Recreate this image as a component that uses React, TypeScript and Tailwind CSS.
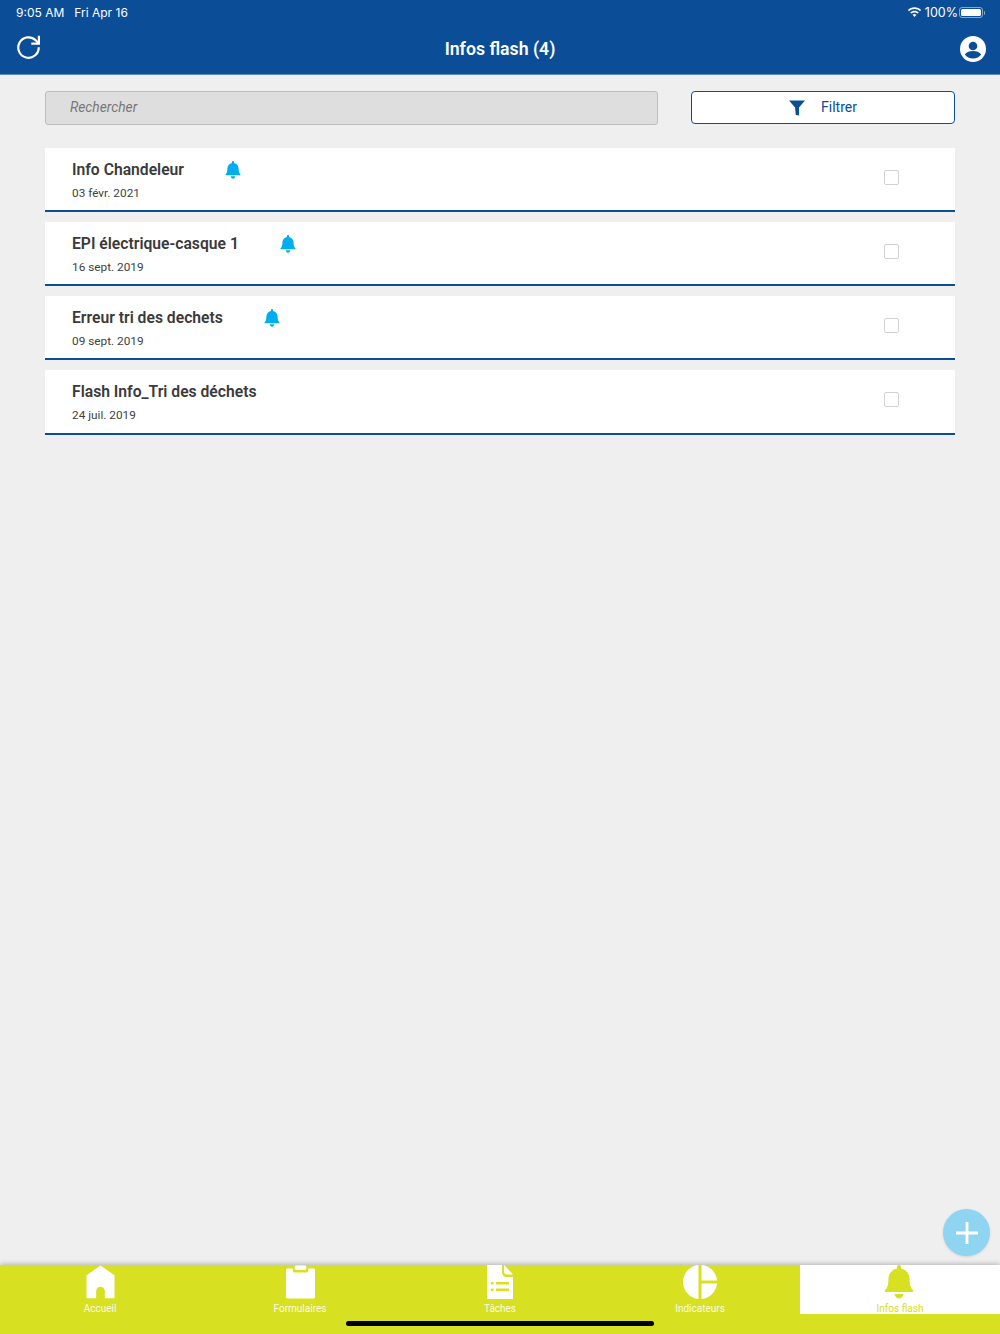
import React from 'react';

const NAVY = '#0b4e97';

const items = [
  { title: 'Info Chandeleur', date: '03 févr. 2021', bell: true },
  { title: 'EPI électrique-casque 1', date: '16 sept. 2019', bell: true },
  { title: 'Erreur tri des dechets', date: '09 sept. 2019', bell: true },
  { title: 'Flash Info_Tri des déchets', date: '24 juil. 2019', bell: false },
];

const BellIcon = ({ className }: { className?: string }) => (
  <svg viewBox="0 0 30 34" className={className} fill="currentColor">
    <path d="M15 0c1.200 0 2 .9 2 2v1.600c5.300 1 8.600 5.200 8.600 10.900 0 6.200 1.400 8.400 3.300 10.600.7.800.3 2-.9 2H2c-1.200 0-1.600-1.200-.9-2C3 22.900 4.400 20.700 4.400 14.500c0-5.700 3.300-9.900 8.600-10.900V2c0-1.100.8-2 2-2z" />
    <path d="M10.500 29h9c-.4 2.700-2.200 4.500-4.500 4.500s-4.100-1.800-4.500-4.500z" />
  </svg>
);

const HomeIcon = () => (
  <svg viewBox="0 0 30 34" className="w-[29px] h-[34px] shrink-0" fill="white">
    <path fillRule="evenodd" d="M15 0l14.500 10v22.500c0 .8-.5 1.300-1.200 1.300H19.500V26.500c0-2.500-2-4.500-4.500-4.500s-4.500 2-4.500 4.500v7.300H1.700c-.7 0-1.200-.5-1.200-1.300V10z" />
  </svg>
);

const ClipboardIcon = () => (
  <svg viewBox="0 0 30 34" className="w-[29px] h-[34px] shrink-0" fill="white">
    <rect x="9" y="0" width="12" height="4.500" rx="1.500" />
    <path d="M1.500 3H7v2c0 1.300.9 2.300 2.200 2.300h11.600C22.100 7.300 23 6.300 23 5V3h5.500c.8 0 1.500.7 1.500 1.500v28c0 .8-.7 1.500-1.500 1.500h-27C.7 34 0 33.300 0 32.500v-28C0 3.700.7 3 1.500 3z" />
  </svg>
);

const TaskIcon = () => (
  <svg viewBox="0 0 26 34" className="w-[26px] h-[34px] shrink-0" fill="white">
    <path d="M17 0l9 9.500h-6c-1.700 0-3-1.300-3-3z" />
    <path
      fillRule="evenodd"
      d="M0 0h15v7.500c0 2.500 2 4.500 4.500 4.500H26v22H0zM4 17v2.500h2.500V17zM9 17v2.500h13V17zM4 23.500V26h2.500v-2.500zM9 23.500V26h13v-2.500z"
    />
  </svg>
);

const PieIcon = () => (
  <svg viewBox="0 0 34 34" className="w-[34px] h-[34px] shrink-0" fill="white">
    <path d="M15.500 0v34C6.800 33.300 0 26 0 17S6.800.7 15.500 0z" />
    <path d="M18.500 0C26.800.7 33.300 7.200 34 15.500H18.500z" />
    <path d="M18.500 18.500H34C33.300 26.800 26.800 33.300 18.500 34z" />
  </svg>
);

const tabs = [
  { label: 'Accueil', icon: <HomeIcon /> },
  { label: 'Formulaires', icon: <ClipboardIcon /> },
  { label: 'Tâches', icon: <TaskIcon /> },
  { label: 'Indicateurs', icon: <PieIcon /> },
];

export default function App() {
  return (
    <div className="relative w-[1000px] h-[1334px] flex flex-col bg-[#efefef] overflow-hidden font-['Roboto',sans-serif]">
      <header className="h-[75px] shrink-0 bg-[#0b4e97] border-b border-[#5d8ebf] text-white">
        <div className="h-6 pt-[1px] pl-4 pr-[15px] flex items-center justify-between font-['Inter',sans-serif] text-[12px]">
          <div className="flex gap-[10px]">
            <span>9:05 AM</span>
            <span>Fri Apr 16</span>
          </div>
          <div className="flex items-center text-[12.5px]">
            <svg viewBox="0 0 16 12" className="w-[15px] h-[11px] mr-[2px]" fill="white">
              <path d="M8 2.200c2.300 0 4.400.9 6 2.400l1.200-1.300C13.300 1.400 10.800.3 8 .3S2.700 1.400.8 3.300L2 4.600c1.600-1.500 3.700-2.400 6-2.400z" />
              <path d="M8 5.900c1.300 0 2.500.5 3.400 1.300l1.300-1.300C11.400 4.700 9.800 4 8 4s-3.400.7-4.700 1.900l1.300 1.300C5.500 6.400 6.700 5.900 8 5.900z" />
              <path d="M8 7.700c-.8 0-1.500.3-2.100.8L8 10.800l2.100-2.300c-.6-.5-1.300-.8-2.100-.8z" />
            </svg>
            <span className="ml-[1px] mt-[1px]">100%</span>
            <div className="ml-[1px] w-[24px] h-[11px] rounded-[3px] border border-white/50 p-[1px]">
              <div className="w-full h-full rounded-[1.500px] bg-white" />
            </div>
            <div className="ml-[1px] w-[1px] h-1 rounded-r-sm bg-white/50" />
          </div>
        </div>
        <div className="h-[50px] pl-[16px] pr-[14px] flex items-center justify-between">
          <svg viewBox="0 0 24 24" className="w-[25px] h-[25px] -mt-[4px]" fill="none" stroke="white" strokeWidth="2.100">
            <path d="M21.800 11.800a9.800 9.800 0 1 1-2.900-6.700L21.800 8" />
            <path d="M22 .8V8.200h-7.300" strokeLinejoin="miter" />
          </svg>
          <h1 className="-ml-[1px] mt-[2px] text-[17.7px] font-semibold leading-none">Infos flash (4)</h1>
          <svg viewBox="0 0 26 26" className="w-[26px] h-[26px] -mt-[1px]">
            <circle cx="13" cy="13" r="13" fill="white" />
            <circle cx="13" cy="10" r="4.300" fill={NAVY} />
            <path d="M4.800 18.400c1.600-2.200 4.800-3.400 8.200-3.400s6.600 1.200 8.200 3.400c-1.900 2.500-4.900 4-8.200 4s-6.300-1.500-8.200-4z" fill={NAVY} />
          </svg>
        </div>
      </header>

      <main className="flex-1 px-[45px]">
        <div className="mt-4 flex items-start justify-between">
          <div className="w-[613px] h-[34px] pl-[24px] pb-[1px] flex items-center rounded-[3px] border border-[#bdbdbd] bg-[#dedede] text-[13.8px] italic text-[#777777]">
            Rechercher
          </div>
          <div className="w-[264px] h-[33px] flex items-center justify-center gap-4 rounded-[4px] border border-[#0b4e97] bg-white text-[14px] text-[#0b4e97]">
            <svg viewBox="0 0 16 16" className="w-4 h-4" fill="currentColor">
              <path d="M0 0.500h16L10 7.500V15.500L6.800 15 6 7.500z" />
            </svg>
            <span>Filtrer</span>
          </div>
        </div>

        <ul className="mt-[23px] flex flex-col gap-[10px]">
          {items.map((item) => (
            <li
              key={item.title}
              className="h-[64px] last:h-[65px] pl-[27px] pr-[56px] flex items-start justify-between bg-white border-b-2 border-[#0b4e97]"
            >
              <div className="pt-[12px]">
                <div className="flex items-center h-5">
                  <span className="text-[15.7px] font-semibold text-[#3a3a3a]">{item.title}</span>
                  {item.bell && <BellIcon className="ml-[41px] w-4 h-[18px] text-[#00aeef]" />}
                </div>
                <div className="mt-[6px] text-[11.8px] leading-[15px] text-[#3f3f3f]">{item.date}</div>
              </div>
              <div className="mt-[22px] w-[15px] h-[15px] rounded-[2px] border border-[#d2d2d2] bg-white" />
            </li>
          ))}
        </ul>
      </main>

      <button className="absolute left-[943px] top-[1209px] w-[47px] h-[47px] rounded-full bg-[#8fd5f2] shadow-sm flex items-center justify-center">
        <svg viewBox="0 0 24 24" className="w-6 h-6" stroke="white" strokeWidth="2.800">
          <path d="M12 1v22M1 12h22" />
        </svg>
      </button>

      <nav className="h-[69px] shrink-0 grid grid-cols-5 items-start bg-[#d7e021] shadow-[0_-1px_5px_rgba(0,0,0,0.25)]">
        {tabs.map((tab) => (
          <div key={tab.label} className="h-[49px] flex flex-col items-center text-white">
            {tab.icon}
            <span className="mt-[4px] text-[10px] leading-[12px] opacity-90">{tab.label}</span>
          </div>
        ))}
        <div className="h-[49px] flex flex-col items-center bg-white text-[#d7e021]">
          <BellIcon className="-ml-[2px] w-[30px] h-[34px] shrink-0" />
          <span className="mt-[4px] text-[10px] leading-[12px]">Infos flash</span>
        </div>
      </nav>

      <div className="absolute left-[346px] top-[1321px] w-[308px] h-[5px] rounded-full bg-black" />
    </div>
  );
}
